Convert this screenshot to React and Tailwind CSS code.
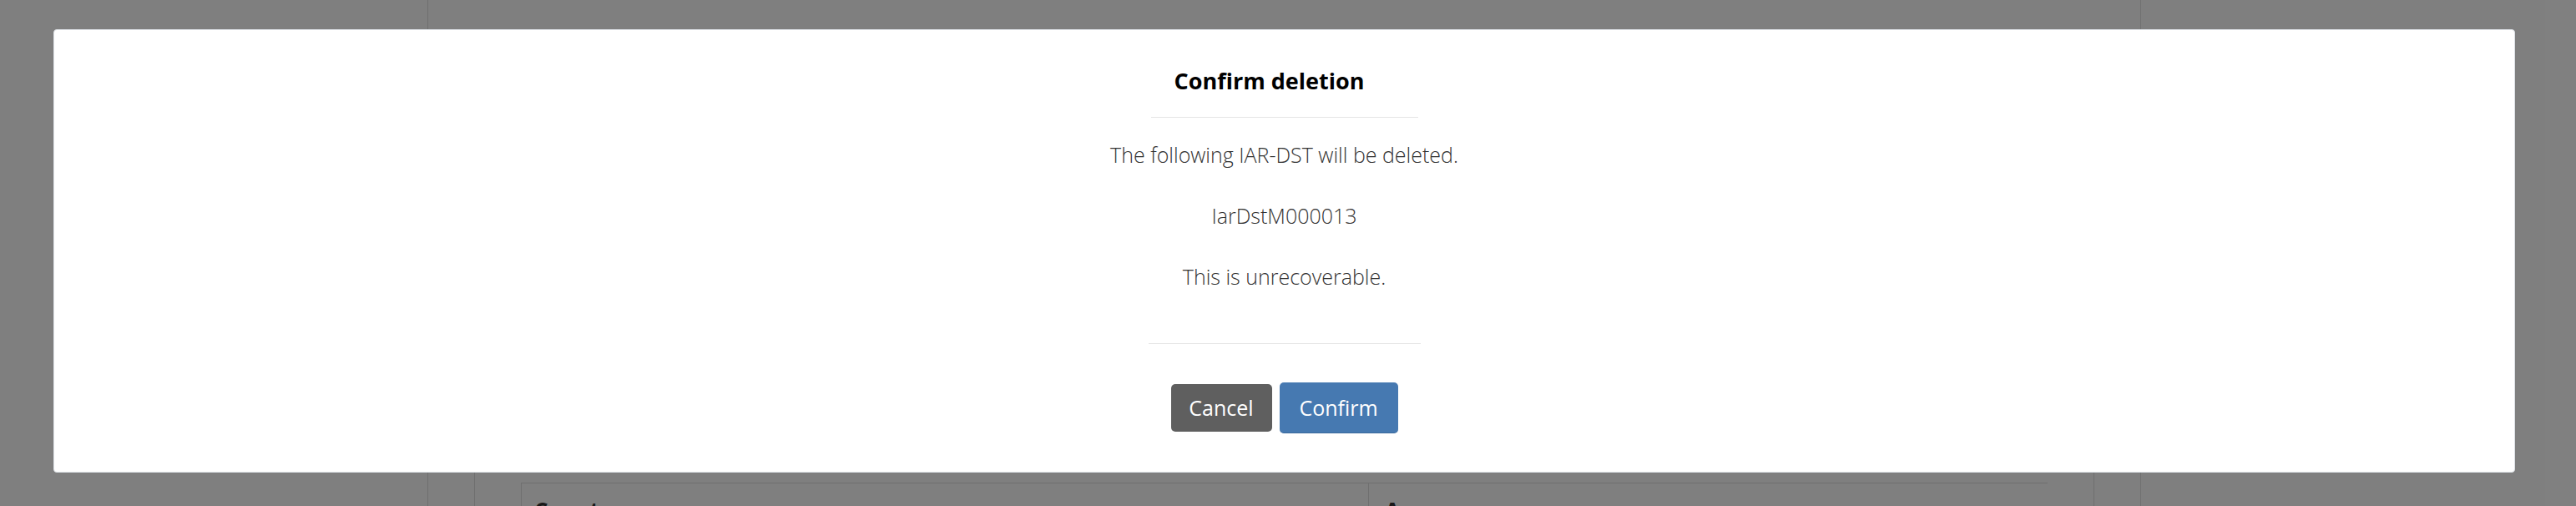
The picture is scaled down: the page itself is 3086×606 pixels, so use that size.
import React from 'react';

// Background page that sits under the dimmed overlay
function PageBehind() {
  return (
    <div className="ml-[512px] w-[2053px] h-[606px] pt-[540px] border-x border-[#dedede]">
      <div className="mx-[55px] h-[66px] pt-[38px] border-x border-[#dedede]">
        <div className="mx-[55px] border-t border-l border-[#dedede] grid grid-cols-[1015px_1fr]">
          <div className="pl-[15px] pt-[14px] border-r border-[#dedede] text-[26px] leading-[37px] font-bold text-[#333]">
            Country
          </div>
          <div className="pl-[19px] pt-[14px] text-[26px] leading-[37px] font-bold text-[#333]">Area</div>
        </div>
      </div>
    </div>
  );
}

function ConfirmDeleteModal({ itemType = 'IAR-DST', itemId = 'IarDstM000013' }) {
  return (
    <div className="ml-[64px] mt-[35px] w-[2949px] h-[531px] bg-white border border-[#dde1e6] rounded-[4px] flex flex-col items-center">
      <h4 className="mt-[41px] pr-[36px] text-[27px] leading-[40px] font-bold text-black">Confirm deletion</h4>
      <div className="mt-[23px] w-[320px] h-px bg-[#e5e5e5]" />

      <div className="mt-[26px] flex flex-col items-center gap-[37px] text-[25px] leading-[36px] font-light text-[#333]">
        <p>The following {itemType} will be deleted.</p>
        <p>{itemId}</p>
        <p>This is unrecoverable.</p>
      </div>

      <div className="mt-[62px] w-[326px] h-px bg-[#e5e5e5]" />

      <div className="mt-[46px] flex items-center gap-[9px]">
        <button className="w-[121px] h-[57px] rounded-[5px] bg-[#5f5f5f] text-white text-[25px] leading-none">
          Cancel
        </button>
        <button className="w-[142px] h-[61px] rounded-[5px] bg-[#4679b1] border-b border-[#3c6a9c] text-white text-[25px] leading-none">
          Confirm
        </button>
      </div>
    </div>
  );
}

export default function App() {
  return (
    <div className="relative w-[3086px] h-[606px] overflow-hidden bg-white font-['Open_Sans',_'Liberation_Sans',_sans-serif]">
      <PageBehind />
      <div className="absolute inset-0 bg-black/50">
        <ConfirmDeleteModal />
      </div>
    </div>
  );
}
